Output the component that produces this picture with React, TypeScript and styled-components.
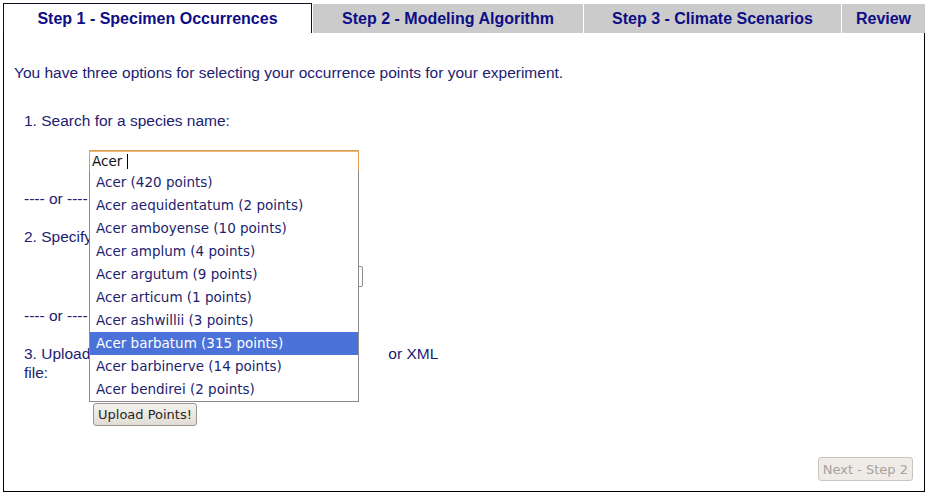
import React from "react";
import styled, { createGlobalStyle } from "styled-components";

const Global = createGlobalStyle`
  html, body { margin: 0; padding: 0; background: #ffffff; }
  body { font-family: "Liberation Sans", Arial, sans-serif; }
`;

const Page = styled.div`
  padding: 3px 0 0 3px;
  width: 922px;
`;

const TabBar = styled.div`
  display: flex;
  align-items: flex-end;
  gap: 1px;
  height: 30px;
  background: #ffffff;
`;

const Tab = styled.div<{ $w: number; $active?: boolean }>`
  box-sizing: border-box;
  width: ${(p) => p.$w}px;
  height: ${(p) => (p.$active ? 30 : 29)}px;
  display: flex;
  align-items: center;
  justify-content: center;
  padding-top: ${(p) => (p.$active ? 1 : 0)}px;
  font-family: "Liberation Sans", Arial, sans-serif;
  font-weight: bold;
  font-size: 16px;
  color: #0d0d86;
  background: ${(p) => (p.$active ? "#ffffff" : "#cbcbcb")};
  border: ${(p) => (p.$active ? "1px solid #101020" : "none")};
  border-bottom: none;
  white-space: nowrap;
`;

const Panel = styled.div`
  box-sizing: border-box;
  height: 459px;
  border: 1px solid #000000;
  border-top: none;
  padding: 30px 11px 10px 10px;
  display: flex;
  flex-direction: column;
  color: #1c1c72;
  font-size: 15.5px;
  line-height: 19px;
`;

const Text = styled.div<{ $mt?: number; $indent?: number; $maxW?: number }>`
  margin-top: ${(p) => p.$mt ?? 0}px;
  padding-left: ${(p) => p.$indent ?? 0}px;
  ${(p) => (p.$maxW ? `max-width: ${p.$maxW}px;` : "")}
`;

const TextGap = styled.span`
  display: inline-block;
  width: 30px;
`;

const FieldSlot = styled.div<{ $mt: number; $ml: number }>`
  position: relative;
  margin-top: ${(p) => p.$mt}px;
  margin-left: ${(p) => p.$ml}px;
  align-self: flex-start;
`;

const SearchBox = styled.div`
  box-sizing: border-box;
  width: 270px;
  height: 22px;
  border: 1px solid #e0a052;
  box-shadow: inset 0 1px 0 #e8b878;
  background: #ffffff;
  display: flex;
  align-items: center;
  padding-left: 2px;
  font-family: "DejaVu Sans", Verdana, sans-serif;
  font-size: 13.5px;
  line-height: 16px;
  color: #111111;
`;

const Caret = styled.span`
  display: inline-block;
  width: 1px;
  height: 15px;
  background: #000000;
  margin-left: 5px;
`;

const Suggestions = styled.ul`
  position: absolute;
  top: 21px;
  left: 0;
  z-index: 2;
  box-sizing: border-box;
  width: 270px;
  margin: 0;
  padding: 0;
  list-style: none;
  background: #ffffff;
  border: 1px solid #8a8a8a;
  border-top: none;
`;

const Suggestion = styled.li<{ $hl?: boolean }>`
  height: 23px;
  line-height: 23px;
  padding-left: 6px;
  font-family: "DejaVu Sans", Verdana, sans-serif;
  font-size: 13.5px;
  white-space: nowrap;
  color: ${(p) => (p.$hl ? "#ffffff" : "#1e1e6e")};
  background: ${(p) => (p.$hl ? "#4a72d8" : "#ffffff")};
`;

const PointInput = styled.div`
  box-sizing: border-box;
  width: 274px;
  height: 21px;
  border: 1px solid #8e8e8e;
  border-radius: 2px;
  background: #ffffff;
`;

const Button = styled.button<{ $disabled?: boolean }>`
  box-sizing: border-box;
  height: ${(p) => (p.$disabled ? 24 : 23)}px;
  padding: 0 4px;
  font-family: "DejaVu Sans", Verdana, sans-serif;
  font-size: 13px;
  color: ${(p) => (p.$disabled ? "#a8a29b" : "#262626")};
  background: ${(p) =>
    p.$disabled ? "#efebe6" : "linear-gradient(#f4f2ee, #e1ddd6)"};
  border: 1px solid ${(p) => (p.$disabled ? "#cbc4bc" : "#9a968f")};
  border-radius: 3px;
  cursor: default;
`;

const UploadRow = styled.div`
  margin-top: 21px;
  margin-left: 79px;
  display: flex;
`;

const Footer = styled.div`
  margin-top: auto;
  display: flex;
  justify-content: flex-end;
`;

const items = [
  "Acer (420 points)",
  "Acer aequidentatum (2 points)",
  "Acer amboyense (10 points)",
  "Acer amplum (4 points)",
  "Acer argutum (9 points)",
  "Acer articum (1 points)",
  "Acer ashwillii (3 points)",
  "Acer barbatum (315 points)",
  "Acer barbinerve (14 points)",
  "Acer bendirei (2 points)",
];

export default function App() {
  return (
    <>
      <Global />
      <Page>
        <TabBar>
          <Tab $w={309} $active>Step 1 - Specimen Occurrences</Tab>
          <Tab $w={270}>Step 2 - Modeling Algorithm</Tab>
          <Tab $w={257}>Step 3 - Climate Scenarios</Tab>
          <Tab $w={83}>Review</Tab>
        </TabBar>
        <Panel>
          <Text>You have three options for selecting your occurrence points for your experiment.</Text>
          <Text $mt={29} $indent={10}>1. Search for a species name:</Text>
          <FieldSlot $mt={20} $ml={75}>
            <SearchBox role="textbox">
              Acer<Caret />
            </SearchBox>
            <Suggestions>
              {items.map((it, i) => (
                <Suggestion key={it} $hl={i === 7}>
                  {it}
                </Suggestion>
              ))}
            </Suggestions>
          </FieldSlot>
          <Text $mt={17} $indent={10}>---- or ----</Text>
          <Text $mt={19} $indent={10}>2. Specify a location by latitude and longitude:</Text>
          <FieldSlot $mt={20} $ml={75}>
            <PointInput />
          </FieldSlot>
          <Text $mt={19} $indent={10}>---- or ----</Text>
          <Text $mt={19} $indent={10} $maxW={425}>
            3. Upload your own occurrence points as a CSV<TextGap /> or XML file:
          </Text>
          <UploadRow>
            <Button>Upload Points!</Button>
          </UploadRow>
          <Footer>
            <Button $disabled disabled>
              Next - Step 2
            </Button>
          </Footer>
        </Panel>
      </Page>
    </>
  );
}
